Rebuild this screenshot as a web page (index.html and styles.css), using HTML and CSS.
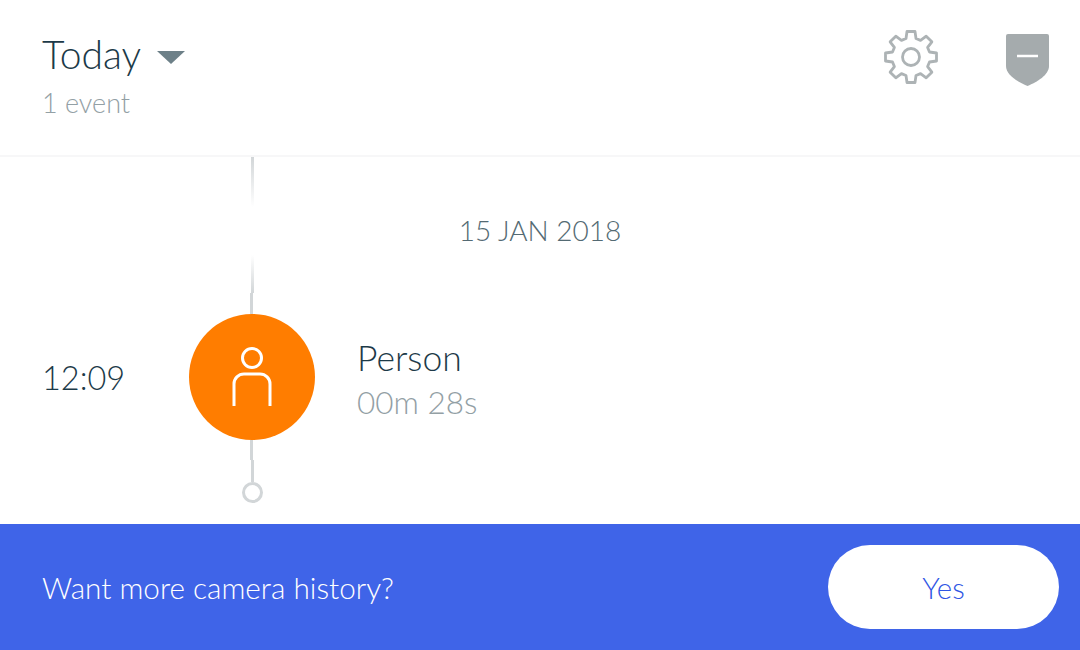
FILE: index.html
```html
<!DOCTYPE html>
<html lang="en">
<head>
  <meta charset="UTF-8" />
  <title>Camera history</title>
  <link rel="stylesheet" href="styles.css">
</head>
<body>

  <header class="top-bar">
    <div class="day-picker">
      <div class="day-title">
        <span>Today</span>
        <svg class="caret" viewBox="0 0 30 15">
          <path d="M1 1h28L15 14z"/>
        </svg>
      </div>
      <div class="day-count">1 event</div>
    </div>

    <div class="top-actions">
      <svg class="gear" viewBox="0 0 54 54">
        <path d="M22 8.5L23 1.5H31L32 8.5L36.54 10.38L42.2 6.14L47.86 11.8L43.62 17.46L45.5 22L52.5 23V31L45.5 32L43.62 36.54L47.86 42.2L42.2 47.86L36.54 43.62L32 45.5L31 52.5H23L22 45.5L17.46 43.62L11.8 47.86L6.14 42.2L10.38 36.54L8.5 32L1.5 31V23L8.5 22L10.38 17.46L6.14 11.8L11.8 6.14L17.46 10.38z"/>
        <circle cx="27" cy="27" r="8.5"/>
      </svg>
      <svg class="shield" viewBox="0 0 43 52">
        <path class="shield-body" d="M2 0H41a2 2 0 0 1 2 2V32C43 41 31 48 21.500 52C12 48 0 41 0 32V2A2 2 0 0 1 2 0z"/>
        <path class="shield-minus" d="M11 22H32"/>
      </svg>
    </div>
  </header>

  <main class="timeline">
    <div class="date-row">
      <div class="rail-top">
        <div class="rail-fade-out"></div>
        <div class="rail-fade-in"></div>
        <div class="rail-solid"></div>
      </div>
      <div class="date-label">15 JAN 2018</div>
    </div>

    <div class="event-row">
      <div class="event-time">12:09</div>
      <div class="event-node">
        <svg class="person" viewBox="0 0 42 60">
          <circle cx="21" cy="11" r="9.500"/>
          <path d="M3 59V37A10 10 0 0 1 13 27H29A10 10 0 0 1 39 37V59"/>
        </svg>
      </div>
      <div class="event-info">
        <div class="event-name">Person</div>
        <div class="event-length">00m 28s</div>
      </div>
    </div>

    <div class="rail-end">
      <div class="rail-solid rail-short"></div>
      <div class="rail-last"></div>
      <div class="rail-dot"></div>
    </div>
  </main>

  <footer class="upsell">
    <span>Want more camera history?</span>
    <button class="yes-btn">Yes</button>
  </footer>

</body>
</html>
```

FILE: styles.css
```css
* {
  box-sizing: border-box;
}

body {
  margin: 0;
  height: 650px;
  overflow: hidden;
  background-color: #fff;
  font-family: Lato, "Open Sans", sans-serif;
  font-weight: 300;
  display: flex;
  flex-direction: column;
}

.top-bar {
  height: 157px;
  flex: none;
  border-bottom: 2px solid #f7f7f8;
  padding: 30px 31px 0 42px;
  display: flex;
  justify-content: space-between;
  align-items: flex-start;
}

.day-title {
  display: flex;
  align-items: center;
  gap: 14px;
  font-size: 39px;
  line-height: 48px;
  color: #1c3a48;
}
.caret {
  width: 30px;
  height: 15px;
  margin-top: 6px;
  margin-left: 1px;
  fill: #6d8088;
}
.day-count {
  margin-top: 5px;
  font-size: 27px;
  line-height: 40px;
  color: #93a0a5;
}

.top-actions {
  display: flex;
  gap: 68px;
  margin-top: 4px;
}
.gear {
  width: 54px;
  height: 54px;
  margin-top: -4px;
  fill: none;
  stroke: #adb3b5;
  stroke-width: 2.8;
  stroke-linejoin: round;
}
.shield {
  width: 43px;
  height: 52px;
}
.shield-body {
  fill: #a5abad;
}
.shield-minus {
  stroke: #fff;
  stroke-width: 2.5;
}

.timeline {
  flex: 1;
  display: flex;
  flex-direction: column;
}

.date-row {
  height: 157px;
  flex: none;
  display: grid;
}
.date-row > * {
  grid-area: 1 / 1;
}
.date-label {
  place-self: center;
  margin-bottom: 11px;
  font-size: 28px;
  color: #546a73;
}

.rail-top {
  display: flex;
  flex-direction: column;
  padding-left: 250px;
}
.rail-fade-out {
  width: 3px;
  height: 50px;
  margin-left: 1px;
  background: linear-gradient(#d2d6d8, #fff);
}
.rail-fade-in {
  width: 3px;
  height: 38px;
  margin-top: 48px;
  margin-left: 1px;
  background: linear-gradient(#fff, #d2d6d8);
}
.rail-solid {
  width: 3px;
  height: 21px;
  background-color: #d2d6d8;
}

.event-row {
  height: 126px;
  flex: none;
  display: flex;
  align-items: center;
  padding-left: 42px;
}
.event-time {
  width: 147px;
  font-size: 32.500px;
  color: #1c3a48;
}
.event-node {
  width: 126px;
  height: 126px;
  border-radius: 50%;
  background-color: #ff7d00;
  display: flex;
  align-items: center;
  justify-content: center;
}
.person {
  width: 42px;
  height: 60px;
  fill: none;
  stroke: #fff;
  stroke-width: 3;
}
.event-info {
  margin-left: 42px;
  margin-top: 6px;
}
.event-name {
  font-size: 35.500px;
  line-height: 44px;
  color: #1c3a48;
}
.event-length {
  font-size: 31.500px;
  line-height: 44px;
  color: #93a0a5;
}

.rail-end {
  padding-left: 250px;
}
.rail-short {
  height: 20px;
}
.rail-last {
  width: 3px;
  height: 22px;
  margin-left: 1px;
  background-color: #d2d6d8;
}
.rail-dot {
  width: 21px;
  height: 21px;
  margin-left: -8px;
  border: 3px solid #d2d6d8;
  border-radius: 50%;
}

.upsell {
  height: 126px;
  flex: none;
  background-color: #3f64e8;
  padding: 0 21px 0 42px;
  display: flex;
  align-items: center;
  justify-content: space-between;
  color: #fff;
  font-size: 29.700px;
}
.yes-btn {
  width: 231px;
  height: 84px;
  border: none;
  border-radius: 42px;
  background-color: #fff;
  color: #2f55e4;
  font-family: inherit;
  font-weight: inherit;
  font-size: 29.500px;
}
```
